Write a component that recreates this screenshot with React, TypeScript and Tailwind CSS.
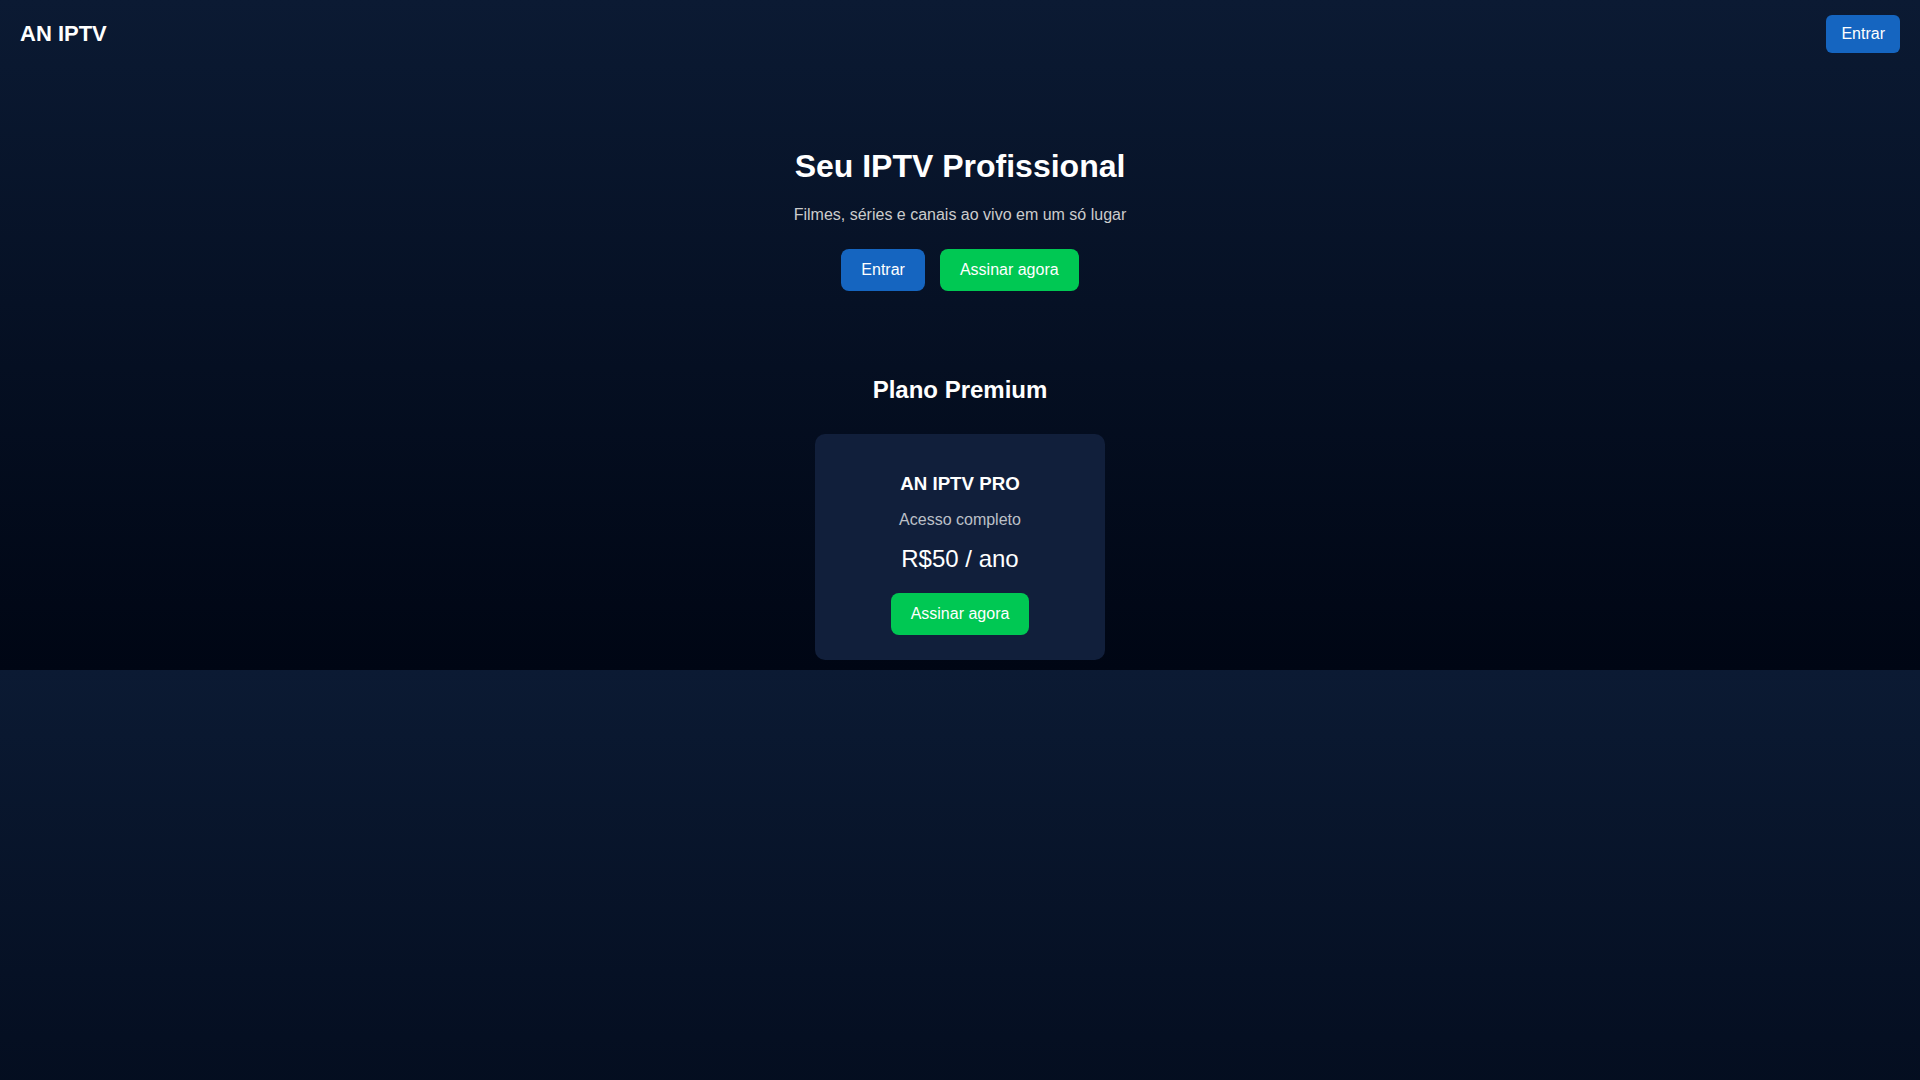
import React from 'react'

const font = { fontFamily: '"Liberation Sans", Arial, sans-serif' }

const Header: React.FC = () => (
  <header className="flex items-center justify-between px-5 py-[15px]">
    <span className="text-[22px] font-bold leading-[26px]">AN IPTV</span>
    <button
      className="rounded-[6px] bg-[#1565c0] px-[15px] py-[10px] text-[16px] leading-[18px] text-white"
      type="button"
    >
      Entrar
    </button>
  </header>
)

const PlanCard: React.FC = () => (
  <div className="mx-auto mt-[28px] flex w-[290px] flex-col items-center rounded-[10px] bg-[#111f3b] px-5 pb-[25px] pt-5">
    <h3 className="mt-[18px] text-[18.72px] font-bold leading-[24px]">AN IPTV PRO</h3>
    <p className="mt-[11.5px] text-[16px] leading-[24px] text-[#bcc0c8]">Acesso completo</p>
    <p className="mt-[11px] text-[24px] leading-[32px]">R$50 / ano</p>
    <button
      className="mt-[18.3px] rounded-[8px] bg-[#00c853] px-5 py-3 text-[16px] leading-[18px] text-white"
      type="button"
    >
      Assinar agora
    </button>
  </div>
)

export default function App() {
  return (
    <div
      className="min-h-screen bg-[linear-gradient(180deg,#0b1a33_0%,#000614_100%)] bg-[length:100%_670px] bg-repeat text-white"
      style={font}
    >
      <Header />

      {/* Hero */}
      <section className="flex flex-col items-center text-center">
        <h1 className="mt-[78px] text-[32px] font-bold leading-[40px]">Seu IPTV Profissional</h1>
        <p className="mt-[17px] text-[16px] leading-[24px] text-[#cccccc]">
          Filmes, séries e canais ao vivo em um só lugar
        </p>
        <div className="mt-[22px] flex gap-[15px]">
          <button
            className="rounded-[8px] bg-[#1565c0] px-5 py-3 text-[16px] leading-[18px] text-white"
            type="button"
          >
            Entrar
          </button>
          <button
            className="rounded-[8px] bg-[#00c853] px-5 py-3 text-[16px] leading-[18px] text-white"
            type="button"
          >
            Assinar agora
          </button>
        </div>
      </section>

      {/* Plans */}
      <section className="flex flex-col items-center text-center">
        <h2 className="mt-[83px] text-[24px] font-bold leading-[32px]">Plano Premium</h2>
        <PlanCard />
      </section>
    </div>
  )
}
